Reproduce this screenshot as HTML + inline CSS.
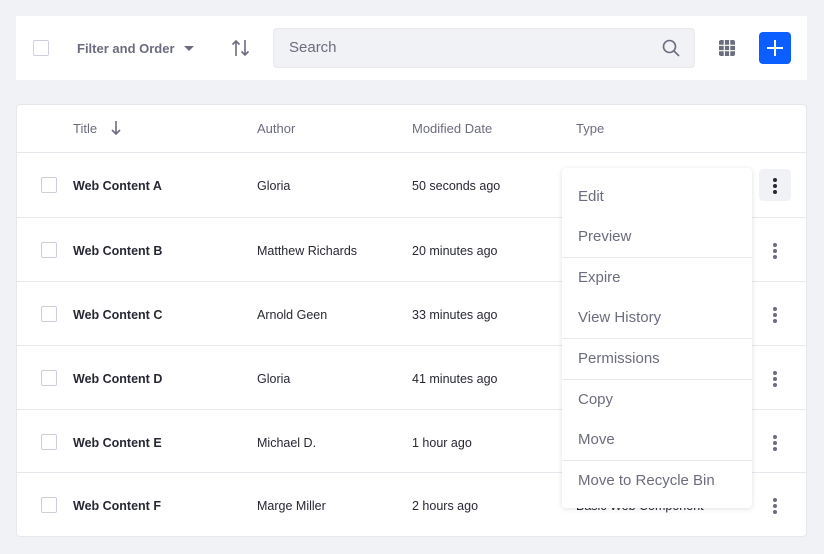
<!DOCTYPE html><html><head><style>
*{box-sizing:border-box;margin:0;padding:0}
body{width:824px;height:554px;background:#f1f2f5;font-family:"Liberation Sans",sans-serif;position:relative;overflow:hidden;color:#272833}
.a{position:absolute}
.cb{position:absolute;width:16px;height:16px;border:1px solid #cdced9;border-radius:2px;background:#fff}
.hd{position:absolute;top:121px;font-size:13px;color:#6b6c7e}
.row{position:absolute;left:16px;width:791px;height:64px;border-top:1px solid #e7e7ed}
.row span{position:absolute;top:1px;line-height:64px;font-size:12.5px}
.t{left:57px;font-weight:bold}
.au{left:241px}.md{left:396px}.ty{left:560px}
.k{position:absolute;left:757px;top:25px;width:4px;height:16px}
.k i{display:block;width:4px;height:4px;border-radius:2px;background:#6b6c7e;margin-bottom:2px}
.menu{position:absolute;left:562px;top:168px;width:190px;height:340px;background:#fff;border-radius:4px;box-shadow:0 1px 6px rgba(0,0,0,.12)}
.mi{height:40px;line-height:40px;padding-left:16px;font-size:15px;color:#6b6c7e}
.dv{height:1px;background:#e7e7ed}
</style></head><body>
<div class="a" style="left:16px;top:16px;width:791px;height:64px;background:#fff"></div>
<div class="cb" style="left:33px;top:40px"></div>
<div class="a" style="left:77px;top:41px;font-size:13px;font-weight:bold;color:#6b6c7e">Filter and Order</div>
<div class="a" style="left:184px;top:46px;width:0;height:0;border-left:5px solid transparent;border-right:5px solid transparent;border-top:5px solid #6b6c7e"></div>
<svg class="a" style="left:231px;top:38px" width="20" height="20" viewBox="0 0 20 20" fill="none" stroke="#6b6c7e" stroke-width="1.6"><path d="M5 18V3M1.5 6.5 5 3l3.5 3.5M14 2v15M10.5 13.5 14 17l3.5-3.5"/></svg>
<div class="a" style="left:273px;top:28px;width:422px;height:40px;background:#f1f2f5;border:1px solid #e7e7ed;border-radius:4px"></div>
<div class="a" style="left:289px;top:39px;font-size:15px;color:#6b6c7e">Search</div>
<svg class="a" style="left:661px;top:38px" width="20" height="20" viewBox="0 0 20 20" fill="none" stroke="#6b6c7e" stroke-width="1.6"><circle cx="8.5" cy="8.5" r="6"/><path d="M13 13l5 5"/></svg>
<svg class="a" style="left:719px;top:40px" width="16" height="16" viewBox="0 0 16 16"><rect x="0" y="0" width="16" height="16" rx="2" fill="#6b6c7e"/><path d="M5.3 0v16M10.7 0v16M0 5.3h16M0 10.7h16" stroke="#fff" stroke-width="1.2"/></svg>
<div class="a" style="left:759px;top:32px;width:32px;height:32px;background:#0b5fff;border-radius:4px"></div>
<svg class="a" style="left:759px;top:32px" width="32" height="32"><path d="M16 8v16M8 16h16" stroke="#fff" stroke-width="2"/></svg>
<div class="a" style="left:16px;top:104px;width:791px;height:433px;background:#fff;border:1px solid #e7e7ed;border-radius:4px"></div>
<div class="hd" style="left:73px">Title</div>
<svg class="a" style="left:110px;top:120px" width="12" height="16" fill="none" stroke="#6b6c7e" stroke-width="1.6"><path d="M6 1v13M2 10l4 4 4-4"/></svg>
<div class="hd" style="left:257px">Author</div>
<div class="hd" style="left:412px">Modified Date</div>
<div class="hd" style="left:576px">Type</div>
<div class="row" style="top:152px"><div class="cb" style="left:25px;top:24px"></div><span class="t">Web Content A</span><span class="au">Gloria</span><span class="md">50 seconds ago</span><span class="ty">Basic Web Component</span><div class="a" style="left:743px;top:16px;width:32px;height:32px;background:#f1f2f5;border-radius:4px"></div><div class="k"><i style="background:#272833"></i><i style="background:#272833"></i><i style="background:#272833"></i></div></div>
<div class="row" style="top:217px"><div class="cb" style="left:25px;top:24px"></div><span class="t">Web Content B</span><span class="au">Matthew Richards</span><span class="md">20 minutes ago</span><span class="ty">Basic Web Component</span><div class="k"><i></i><i></i><i></i></div></div>
<div class="row" style="top:281px"><div class="cb" style="left:25px;top:24px"></div><span class="t">Web Content C</span><span class="au">Arnold Geen</span><span class="md">33 minutes ago</span><span class="ty">Basic Web Component</span><div class="k"><i></i><i></i><i></i></div></div>
<div class="row" style="top:345px"><div class="cb" style="left:25px;top:24px"></div><span class="t">Web Content D</span><span class="au">Gloria</span><span class="md">41 minutes ago</span><span class="ty">Basic Web Component</span><div class="k"><i></i><i></i><i></i></div></div>
<div class="row" style="top:409px"><div class="cb" style="left:25px;top:24px"></div><span class="t">Web Content E</span><span class="au">Michael D.</span><span class="md">1 hour ago</span><span class="ty">Basic Web Component</span><div class="k"><i></i><i></i><i></i></div></div>
<div class="row" style="top:472px"><div class="cb" style="left:25px;top:24px"></div><span class="t">Web Content F</span><span class="au">Marge Miller</span><span class="md">2 hours ago</span><span class="ty">Basic Web Component</span><div class="k"><i></i><i></i><i></i></div></div>
<div class="menu">
<div class="mi" style="margin-top:9px">Edit</div><div class="mi">Preview</div><div class="dv"></div>
<div class="mi">Expire</div><div class="mi">View History</div><div class="dv"></div>
<div class="mi">Permissions</div><div class="dv"></div>
<div class="mi">Copy</div><div class="mi">Move</div><div class="dv"></div>
<div class="mi">Move to Recycle Bin</div>
</div>
</body></html>
